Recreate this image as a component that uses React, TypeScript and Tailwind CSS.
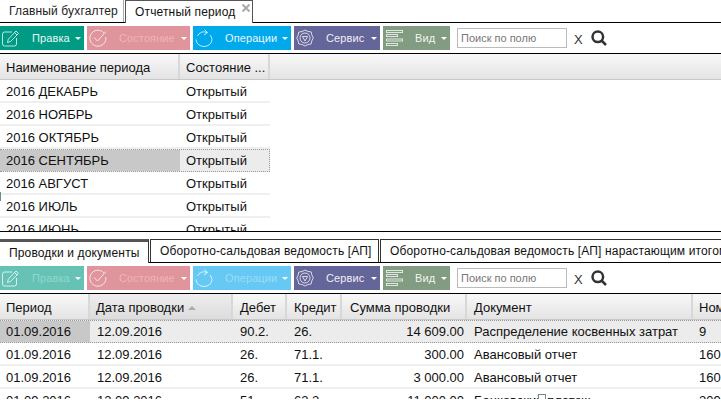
import type { ReactNode } from 'react'

const EditIcon = () => (
  <svg width="18" height="18" viewBox="0 0 18 18" fill="none" stroke="currentColor" strokeWidth="1">
    <path d="M14.500 9v6a2 2 0 0 1-2 2H2.500a2 2 0 0 1-2-2V5a2 2 0 0 1 2-2H10" />
    <path d="M5.500 13.500l.8-3.300L14 2l2.500 2.500-8 8z" />
    <path d="M12.500 3.500L15 6" />
  </svg>
)

const CheckIcon = () => (
  <svg width="18" height="18" viewBox="0 0 18 18" fill="none" stroke="currentColor" strokeWidth="1">
    <path d="M14.800 3.800A8 8 0 1 0 16.800 8" />
    <path d="M5 8.500l3.500 3.500L17 2.500" />
  </svg>
)

const RefreshIcon = () => (
  <svg width="18" height="18" viewBox="0 0 18 18" fill="none" stroke="currentColor" strokeWidth="1">
    <path d="M1 10.500a8 7 0 0 0 16 0 7.300 7.300 0 0 0-2-4.500" />
    <path d="M2.500 7a7 7 0 0 1 9.500-3.500" />
    <path d="M9.500 .5l3 3-3.500 2.500" />
  </svg>
)

const GearIcon = () => (
  <svg width="18" height="18" viewBox="0 0 18 18" fill="none" stroke="currentColor" strokeWidth="1">
    <path d="M9 1l3 1.500 3.200.4.600 3 1.500 3-1.500 3-.6 3-3.200.6L9 17l-3-1.500-3.200-.6-.6-3L.7 9l1.500-3 .6-3 3.200-.4z" />
    <circle cx="9" cy="9" r="5" />
    <path d="M6.500 7.500h5L9 12z" />
  </svg>
)

const ListIcon = () => (
  <svg width="17" height="16" viewBox="0 0 17 16" fill="none" stroke="currentColor" strokeWidth="1">
    <rect x="0.500" y="0.500" width="16" height="2" />
    <rect x="0.500" y="4.500" width="11" height="2" />
    <rect x="0.500" y="9" width="16" height="2" />
    <rect x="0.500" y="13.500" width="11" height="2" />
  </svg>
)

const SearchIcon = () => (
  <svg width="16" height="16" viewBox="0 0 16 16" fill="none" stroke="#333333" strokeWidth="2.500">
    <circle cx="6.800" cy="6.800" r="5.300" />
    <path d="M10.500 10.500l4.500 4.500" />
  </svg>
)

const CloseIcon = () => (
  <svg width="8" height="8" viewBox="0 0 8 8" fill="none" stroke="#aaaaaa" strokeWidth="2">
    <path d="M.5 .5l7 7M7.500 .5l-7 7" />
  </svg>
)

type BtnProps = {
  icon: ReactNode
  label: string
  width: string
  color: string
  text: string
}

const ToolButton = ({ icon, label, width, color, text }: BtnProps) => (
  <div className={`flex h-6 shrink-0 items-center ${width} ${color}`}>
    <span className="ml-[2px] flex w-[18px] justify-center text-white/75">{icon}</span>
    <span className={`ml-[12px] flex-1 whitespace-nowrap text-[11px] tracking-[0.1px] ${text}`}>{label}</span>
    <span className="mr-[3px] h-0 w-0 border-x-[3px] border-t-[3px] border-x-transparent border-t-white" />
  </div>
)

const Toolbar = ({ disabled }: { disabled?: boolean }) => (
  <div className="flex h-8 items-center gap-[3px] border-y border-black">
    <ToolButton
      icon={<EditIcon />}
      label="Правка"
      width="w-[84px]"
      color={disabled ? 'bg-[#66c2b4]' : 'bg-[#009b85]'}
      text={disabled ? 'text-[#8fd8cc]' : 'text-[#e8f7f4]'}
    />
    <ToolButton
      icon={<CheckIcon />}
      label="Состояние"
      width="w-[103px]"
      color="bg-[#e0949c]"
      text="text-[#eeb4ba]"
    />
    <ToolButton
      icon={<RefreshIcon />}
      label="Операции"
      width="w-[98px]"
      color={disabled ? 'bg-[#66c9f3]' : 'bg-[#00a8ec]'}
      text={disabled ? 'text-[#9adcf8]' : 'text-[#e8f7fe]'}
    />
    <ToolButton
      icon={<GearIcon />}
      label="Сервис"
      width="w-[86px]"
      color="bg-[#646598]"
      text="text-[#f0f0f8]"
    />
    <ToolButton
      icon={<ListIcon />}
      label="Вид"
      width="w-[67px]"
      color="bg-[#829c82]"
      text="text-[#f0f5f0]"
    />
    <input
      readOnly
      placeholder="Поиск по полю"
      className="ml-[4px] h-5 w-[110px] border border-[#bbbbbb] px-[3px] text-[11px] placeholder:text-[#777777]"
    />
    <span className="ml-[4px] mt-[3px] text-[13px] text-[#333333]">X</span>
    <span className="ml-[5px]">
      <SearchIcon />
    </span>
  </div>
)

const HeaderCell = ({ label, className, sort }: { label: string; className: string; sort?: boolean }) => (
  <div
    className={`flex h-[25px] shrink-0 items-center gap-1 overflow-hidden whitespace-nowrap border-r-2 border-[#d8d8d8] pt-[2px] ${className}`}
  >
    {label}
    {sort && (
      <span className="h-0 w-0 border-x-[4px] border-b-[4px] border-x-transparent border-b-[#aaaaaa]" />
    )}
  </div>
)

const periods = ['2016 ДЕКАБРЬ', '2016 НОЯБРЬ', '2016 ОКТЯБРЬ', '2016 СЕНТЯБРЬ', '2016 АВГУСТ', '2016 ИЮЛЬ', '2016 ИЮНЬ']

const entries = [
  ['01.09.2016', '12.09.2016', '90.2.', '26.', '14 609.00', 'Распределение косвенных затрат', '9'],
  ['01.09.2016', '12.09.2016', '26.', '71.1.', '300.00', 'Авансовый отчет', '1609'],
  ['01.09.2016', '12.09.2016', '26.', '71.1.', '3 000.00', 'Авансовый отчет', '1609'],
  ['01.09.2016', '12.09.2016', '51', '62.2', '11 000.00', 'Банковский платеж', '2090'],
]

export default function App() {
  return (
    <div className="relative h-[404px] w-[721px] overflow-hidden bg-white font-['Liberation_Sans',sans-serif] text-[13px] text-[#111111]">
      <div className="relative z-10 -mb-px flex h-[23px] text-[12px] tracking-[0.15px]">
        <div className="flex h-[22px] w-[124px] shrink-0 items-center whitespace-nowrap border-r border-[#aaaaaa] pl-[9px] text-[#222222]">
          Главный бухгалтер
        </div>
        <div className="relative ml-px flex w-[128px] shrink-0 items-center whitespace-nowrap border-x border-t border-[#555555] bg-white pl-[9px] pb-px">
          Отчетный период
          <span className="absolute right-[2px] top-[3px] flex">
            <CloseIcon />
          </span>
        </div>
      </div>
      <Toolbar />
      <div className="flex border-b border-[#c8c8c8] bg-gradient-to-b from-[#f8f8f8] to-[#e4e4e4]">
        <HeaderCell label="Наименование периода" className="w-[180px] pl-[6px]" />
        <HeaderCell label="Состояние ..." className="w-[90px] pl-[6px]" />
      </div>
      <div className="h-[151px] w-[270px] overflow-hidden">
        {periods.map((p) => {
          const selected = p === '2016 СЕНТЯБРЬ'
          return (
            <div
              key={p}
              className={`flex h-[23px] items-center ${
                selected ? 'border border-l-0 border-dotted border-[#999999] bg-[#ececec]' : 'border-b-2 border-[#efefef] pt-[2px]'
              }`}
            >
              <div className={`flex h-full w-[180px] shrink-0 items-center pl-[6px] ${selected ? 'bg-[#c8c8c8]' : ''}`}>{p}</div>
              <div className="pl-[6px]">Открытый</div>
            </div>
          )
        })}
      </div>
      <div className="h-[8px] border-t border-black" />
      <div className="relative z-10 -mb-px flex h-[24px] text-[12px] tracking-[0.15px]">
        <div className="flex w-[149px] shrink-0 items-center whitespace-nowrap border-t-[3px] border-r border-t-[#555555] border-r-[#333333] bg-white pl-[9px]">
          Проводки и документы
        </div>
        <div className="ml-px flex h-[23px] w-[229px] shrink-0 items-center whitespace-nowrap border-x border-t border-[#333333] pl-[9px]">
          Оборотно-сальдовая ведомость [АП]
        </div>
        <div className="ml-px flex h-[23px] flex-1 items-center overflow-hidden whitespace-nowrap border-l border-t border-[#333333] pl-[9px]">
          Оборотно-сальдовая ведомость [АП] нарастающим итогом
        </div>
      </div>
      <Toolbar disabled />
      <div className="flex border-b border-[#c8c8c8] bg-gradient-to-b from-[#f8f8f8] to-[#e4e4e4]">
        <HeaderCell label="Период" className="w-[90px] pl-[6px] border-[#c0c0c0]" />
        <HeaderCell label="Дата проводки" className="w-[143px] bg-gradient-to-b from-[#eeeeee] to-[#dcdcdc] pl-[6px]" sort />
        <HeaderCell label="Дебет" className="w-[54px] pl-[7px]" />
        <HeaderCell label="Кредит" className="w-[55px] pl-[7px]" />
        <HeaderCell label="Сумма проводки" className="w-[125px] pl-[8px]" />
        <HeaderCell label="Документ" className="w-[226px] pl-[7px]" />
        <HeaderCell label="Номер" className="w-[60px] border-r-0 pl-[6px]" />
      </div>
      <div className="relative h-[79px] overflow-hidden">
        {entries.map((r, i) => (
          <div
            key={i}
            className={`flex h-[23px] items-center whitespace-nowrap ${
              i === 0 ? 'border-y border-dotted border-[#999999] bg-[#ececec]' : 'border-b-2 border-[#efefef] pt-[2px]'
            }`}
          >
            <div className={`flex h-full w-[90px] shrink-0 items-center pl-[6px] ${i === 0 ? 'bg-[#c8c8c8]' : ''}`}>{r[0]}</div>
            <div className="w-[143px] shrink-0 pl-[7px]">{r[1]}</div>
            <div className="w-[54px] shrink-0 pl-[7px]">{r[2]}</div>
            <div className="w-[55px] shrink-0 pl-[7px]">{r[3]}</div>
            <div className="w-[125px] shrink-0 pr-[3px] text-right">{r[4]}</div>
            <div className="w-[226px] shrink-0 pl-[7px]">{r[5]}</div>
            <div className="w-[60px] shrink-0 pl-[6px]">{r[6]}</div>
          </div>
        ))}
        <span className="absolute left-[538px] top-[74px] h-2 w-2 border border-[#6b8f80] bg-white" />
      </div>
      <span className="absolute left-0 top-[192px] h-[9px] w-px bg-[#6b8f80]" />
    </div>
  )
}
